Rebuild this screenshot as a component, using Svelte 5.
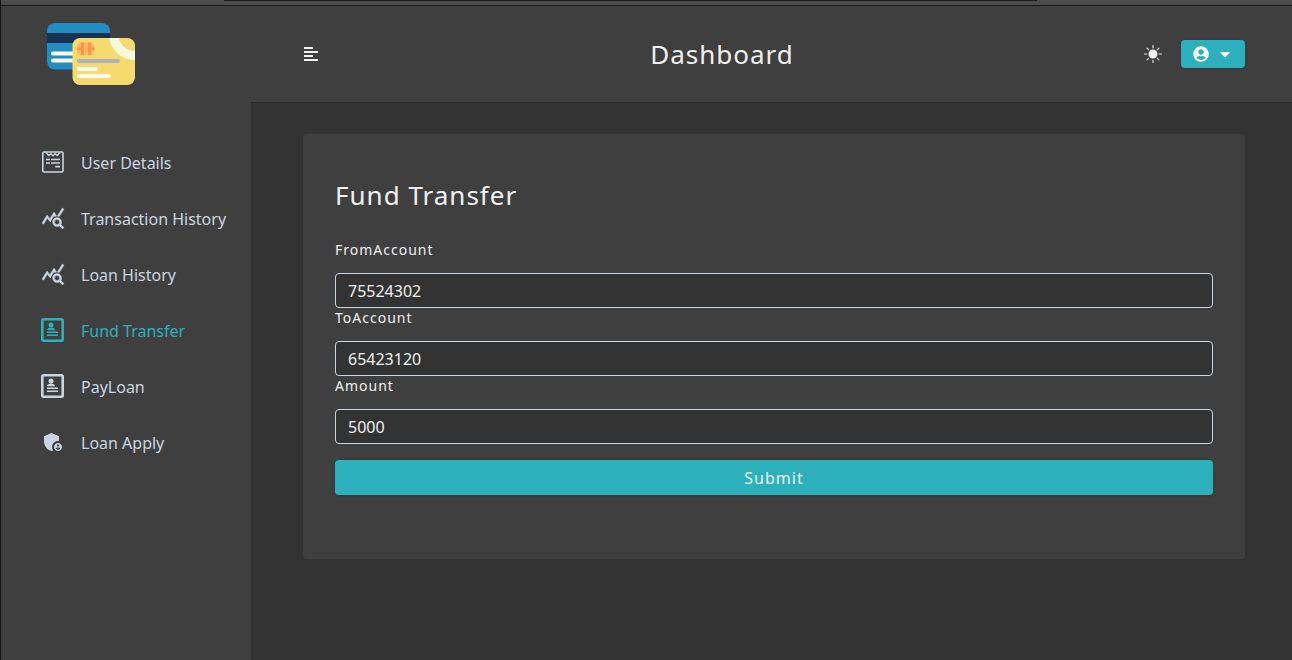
<script>
  let transfer = $state({ from: '75524302', to: '65423120', amount: '5000' });
  const links = [
    { label: 'User Details', icon: 'form' },
    { label: 'Transaction History', icon: 'stats' },
    { label: 'Loan History', icon: 'stats' },
    { label: 'Fund Transfer', icon: 'badge', active: true },
    { label: 'PayLoan', icon: 'badge' },
    { label: 'Loan Apply', icon: 'shield' }
  ];
  const fields = [
    { id: 'from', label: 'FromAccount' },
    { id: 'to', label: 'ToAccount' },
    { id: 'amount', label: 'Amount' }
  ];
</script>

{#snippet icon(name)}
  <svg class="icon" viewBox="0 0 24 24" aria-hidden="true">
    {#if name === 'form'}
      <g fill="none" stroke="currentColor" stroke-width="1.6">
        <rect x="1.8" y="2" width="20.2" height="20" rx="1.2" />
        <path d="M5 2.5l2.8 3L10 3.700 12 5.900l2-2.200 2.200 1.800L19 2.500" stroke-width="1.300" />
        <path d="M5 9.500h4M10 9.500h9M5 13h4M10 13h9M14.300 16.600H19" />
      </g>
    {:else if name === 'stats'}
      <path fill="currentColor" d="M19.88 18.47c.44-.7.7-1.51.7-2.39 0-2.49-2.01-4.5-4.5-4.5s-4.5 2.01-4.5 4.5 2.01 4.5 4.49 4.5c.88 0 1.7-.26 2.39-.7L21.58 23 23 21.58l-3.12-3.11zm-3.8.11c-1.38 0-2.5-1.12-2.5-2.5 0-1.38 1.12-2.5 2.5-2.5s2.5 1.12 2.5 2.5c0 1.38-1.12 2.5-2.5 2.5zm-.36-8.5c-.74.02-1.45.18-2.1.45l-.55-.83-3.8 6.18-3.01-3.52-3.63 5.81L1 17l5-8 3 3.5L13 6l2.72 4.08zm2.59.5c-.64-.28-1.33-.45-2.05-.49L21.38 2 23 3.18l-4.69 7.4z" stroke="currentColor" stroke-width=".4" />
    {:else if name === 'badge'}
      <rect x="1.3" y="1.3" width="20.4" height="21.4" rx="1.2" fill="none" stroke="currentColor" stroke-width="2.6" />
      <g fill="currentColor">
        <circle cx="10" cy="7" r="2.5" />
        <path d="M6 12.300c0-2 2-2.800 4-2.800s4 .8 4 2.800zM6 13.500h11v1.600H6zM6 16.500h11v1.600H6z" />
      </g>
    {:else}
      <path fill="currentColor" d="M17 11c.34 0 .67.04 1 .09V6.27L10.5 3 3 6.27v4.91c0 4.54 3.2 8.79 7.5 9.82.55-.13 1.08-.32 1.6-.55-.69-.98-1.1-2.17-1.1-3.45 0-3.31 2.69-6 6-6z" />
      <path fill="currentColor" d="M17 13c-2.21 0-4 1.79-4 4s1.79 4 4 4 4-1.79 4-4-1.79-4-4-4zm0 1.38c.62 0 1.12.51 1.12 1.12s-.51 1.12-1.12 1.12-1.12-.51-1.12-1.12.5-1.12 1.12-1.12zm0 5.37c-.93 0-1.74-.46-2.24-1.17.05-.72 1.51-1.08 2.24-1.08s2.19.36 2.24 1.08c-.5.71-1.31 1.17-2.24 1.17z" />
    {/if}
  </svg>
{/snippet}

<div class="window">
  <div class="strip"><div class="address"></div></div>
  <div class="app">
    <aside>
      <div class="logo">
        <svg viewBox="0 0 88 62" width="88" height="62" role="img" aria-label="Bank cards">
          <defs>
            <clipPath id="front"><rect x="25.5" y="15" width="62.5" height="47" rx="7.5" /></clipPath>
          </defs>
          <rect width="63" height="46.5" rx="8" fill="#248cc0" />
          <path d="M0 10h63v10H0z" fill="#1a3252" />
          <rect x="4" y="28.5" width="30" height="4" rx="2" fill="#fbfaf0" />
          <rect x="4" y="35.5" width="30" height="4" rx="2" fill="#fbfaf0" />
          <g clip-path="url(#front)">
            <path d="M25 15h63v47H25z" fill="#f5da70" />
            <circle cx="88" cy="11" r="21.5" fill="none" stroke="#f9f9dc" stroke-width="9" />
          </g>
          <rect x="30" y="19.5" width="17.5" height="12.5" rx="4.500" fill="#f8b765" />
          <path d="M34 19.5h3v12.5h-3zM41 19.5h3v12.5h-3zM30 24.500h7v2.500h-7zM41 24.500h6.500v2.500H41z" fill="#f99746" />
          <rect x="30" y="36" width="43" height="4" rx="2" fill="#acb3bd" />
          <rect x="30" y="44" width="21" height="4" rx="2" fill="#fffbed" />
          <rect x="30" y="51" width="34" height="4" rx="2" fill="#fffbed" />
        </svg>
      </div>
      <nav>
        {#each links as link}
          <a href="#{link.label.replace(' ', '-').toLowerCase()}" class:active={link.active} aria-current={link.active ? 'page' : undefined}>
            {@render icon(link.icon)}<span>{link.label}</span>
          </a>
        {/each}
      </nav>
    </aside>
    <div class="content">
      <header>
        <button class="toggle" type="button" aria-label="Toggle sidebar">
          <svg viewBox="0 0 16 16" width="16" height="16"><path fill="currentColor" d="M1 1h9v2H1zM1 5h14v2H1zM1 9h9v2H1zM1 13h14v2H1z" /></svg>
        </button>
        <h1>Dashboard</h1>
        <div class="actions">
          <button class="theme" type="button" aria-label="Toggle theme">
            <svg viewBox="0 0 16 16" width="18" height="18">
              <circle cx="8" cy="8" r="4" fill="currentColor" />
              <path d="M8 .5v2M8 13.500v2M.5 8h2M13.500 8h2M2.700 2.700l1.400 1.400M11.900 11.900l1.400 1.400M2.700 13.300l1.400-1.400M11.900 4.100l1.400-1.400" stroke="currentColor" stroke-linecap="round" />
            </svg>
          </button>
          <button class="user" type="button" aria-label="Account menu">
            <svg viewBox="0 0 496 512" width="16" height="16"><path fill="currentColor" d="M248 8C111 8 0 119 0 256s111 248 248 248 248-111 248-248S385 8 248 8zm0 96c48.600 0 88 39.400 88 88s-39.400 88-88 88-88-39.400-88-88 39.400-88 88-88zm0 344c-58.700 0-111.300-26.600-146.500-68.200 18.800-35.400 55.600-59.800 98.500-59.800 2.400 0 4.800.4 7.100 1.100 13 4.200 26.600 6.900 40.900 6.900 14.300 0 28-2.700 40.900-6.900 2.300-.7 4.700-1.100 7.100-1.100 42.900 0 79.700 24.400 98.500 59.800C359.300 421.400 306.700 448 248 448z" /></svg>
            <svg viewBox="0 0 320 512" width="16" height="16"><path fill="currentColor" d="M31.300 192h257.300c17.800 0 26.700 21.500 14.100 34.100L174.100 354.800c-7.800 7.800-20.500 7.800-28.300 0L17.200 226.100C4.600 213.500 13.500 192 31.300 192z" /></svg>
          </button>
        </div>
      </header>
      <main>
        <form onsubmit={(e) => e.preventDefault()}>
          <h2>Fund Transfer</h2>
          {#each fields as field}
            <div class="row">
              <label for={field.id}>{field.label}</label>
              <input id={field.id} type="text" bind:value={transfer[field.id]} />
            </div>
          {/each}
          <button class="submit" type="submit">Submit</button>
        </form>
      </main>
    </div>
  </div>
</div>

<style>
  :global(body) {
    margin: 0;
    background: #333;
  }
  .window, .window * {
    box-sizing: border-box;
  }
  .window {
    display: flex;
    flex-direction: column;
    min-height: 100vh;
    border-left: 1px solid #1a1019;
    background: #333;
    color: #f0f0f0;
    font-family: "Noto Sans", sans-serif;
    font-size: 16px;
    line-height: 24px;
  }
  .strip {
    height: 6px;
    background: #4b4b4b;
    border-bottom: 1px solid #1a1a1a;
  }
  .address {
    width: 63%;
    height: 1px;
    margin-left: 223px;
    background: #191919;
  }
  .app {
    display: flex;
    flex: 1;
  }
  aside {
    flex: 0 0 250px;
    background: #3f3f3f;
  }
  .logo {
    display: flex;
    align-items: center;
    height: 96px;
    padding-left: 46px;
  }
  nav {
    padding-top: 32px;
  }
  nav a {
    display: flex;
    align-items: center;
    gap: 16px;
    height: 56px;
    padding-left: 40px;
    color: #cbd5e1;
    text-decoration: none;
    white-space: nowrap;
  }
  nav span {
    padding-top: 2px;
  }
  nav a.active {
    color: #2cb1bc;
  }
  .icon {
    width: 24px;
    height: 24px;
  }
  .content {
    display: flex;
    flex: 1;
    flex-direction: column;
    min-width: 0;
  }
  header {
    display: flex;
    align-items: center;
    justify-content: space-between;
    height: 96px;
    padding: 0 47px 0 52px;
    background: #3f3f3f;
    box-shadow: 0 1px 0 rgba(0, 0, 0, 0.15);
  }
  button {
    border: 0;
    font: inherit;
    color: inherit;
    cursor: pointer;
  }
  button svg {
    display: block;
  }
  .toggle, .theme {
    padding: 0;
    background: none;
  }
  h1, h2 {
    margin: 0;
    font-size: 26px;
    font-weight: 400;
    line-height: 32px;
    letter-spacing: 1px;
  }
  .actions {
    display: flex;
    align-items: center;
    gap: 19px;
    padding-left: 19px;
  }
  .user {
    display: flex;
    align-items: center;
    gap: 8px;
    height: 28px;
    padding: 0 12px;
    border-radius: 4px;
    background: #2cb1bc;
    color: #fff;
    box-shadow: 0 1px 3px rgba(0, 0, 0, 0.15);
  }
  main {
    padding: 32px 47px 32px 52px;
  }
  form {
    padding: 45px 32px 64px;
    border-radius: 4px;
    background: #3f3f3f;
  }
  h2 {
    margin-bottom: 29px;
  }
  label {
    display: block;
    margin-bottom: 14px;
    font-size: 14px;
    line-height: 19px;
    letter-spacing: 1px;
  }
  input {
    display: block;
    width: 100%;
    height: 35px;
    padding: 0 12px;
    border: 1px solid #cbd5e1;
    border-radius: 4px;
    background: #333;
    color: inherit;
    font: inherit;
  }
  .submit {
    display: block;
    width: 100%;
    height: 35px;
    margin-top: 16px;
    border-radius: 4px;
    background: #2cb1bc;
    letter-spacing: 1px;
    box-shadow: 0 1px 3px rgba(0, 0, 0, 0.15);
  }
</style>
